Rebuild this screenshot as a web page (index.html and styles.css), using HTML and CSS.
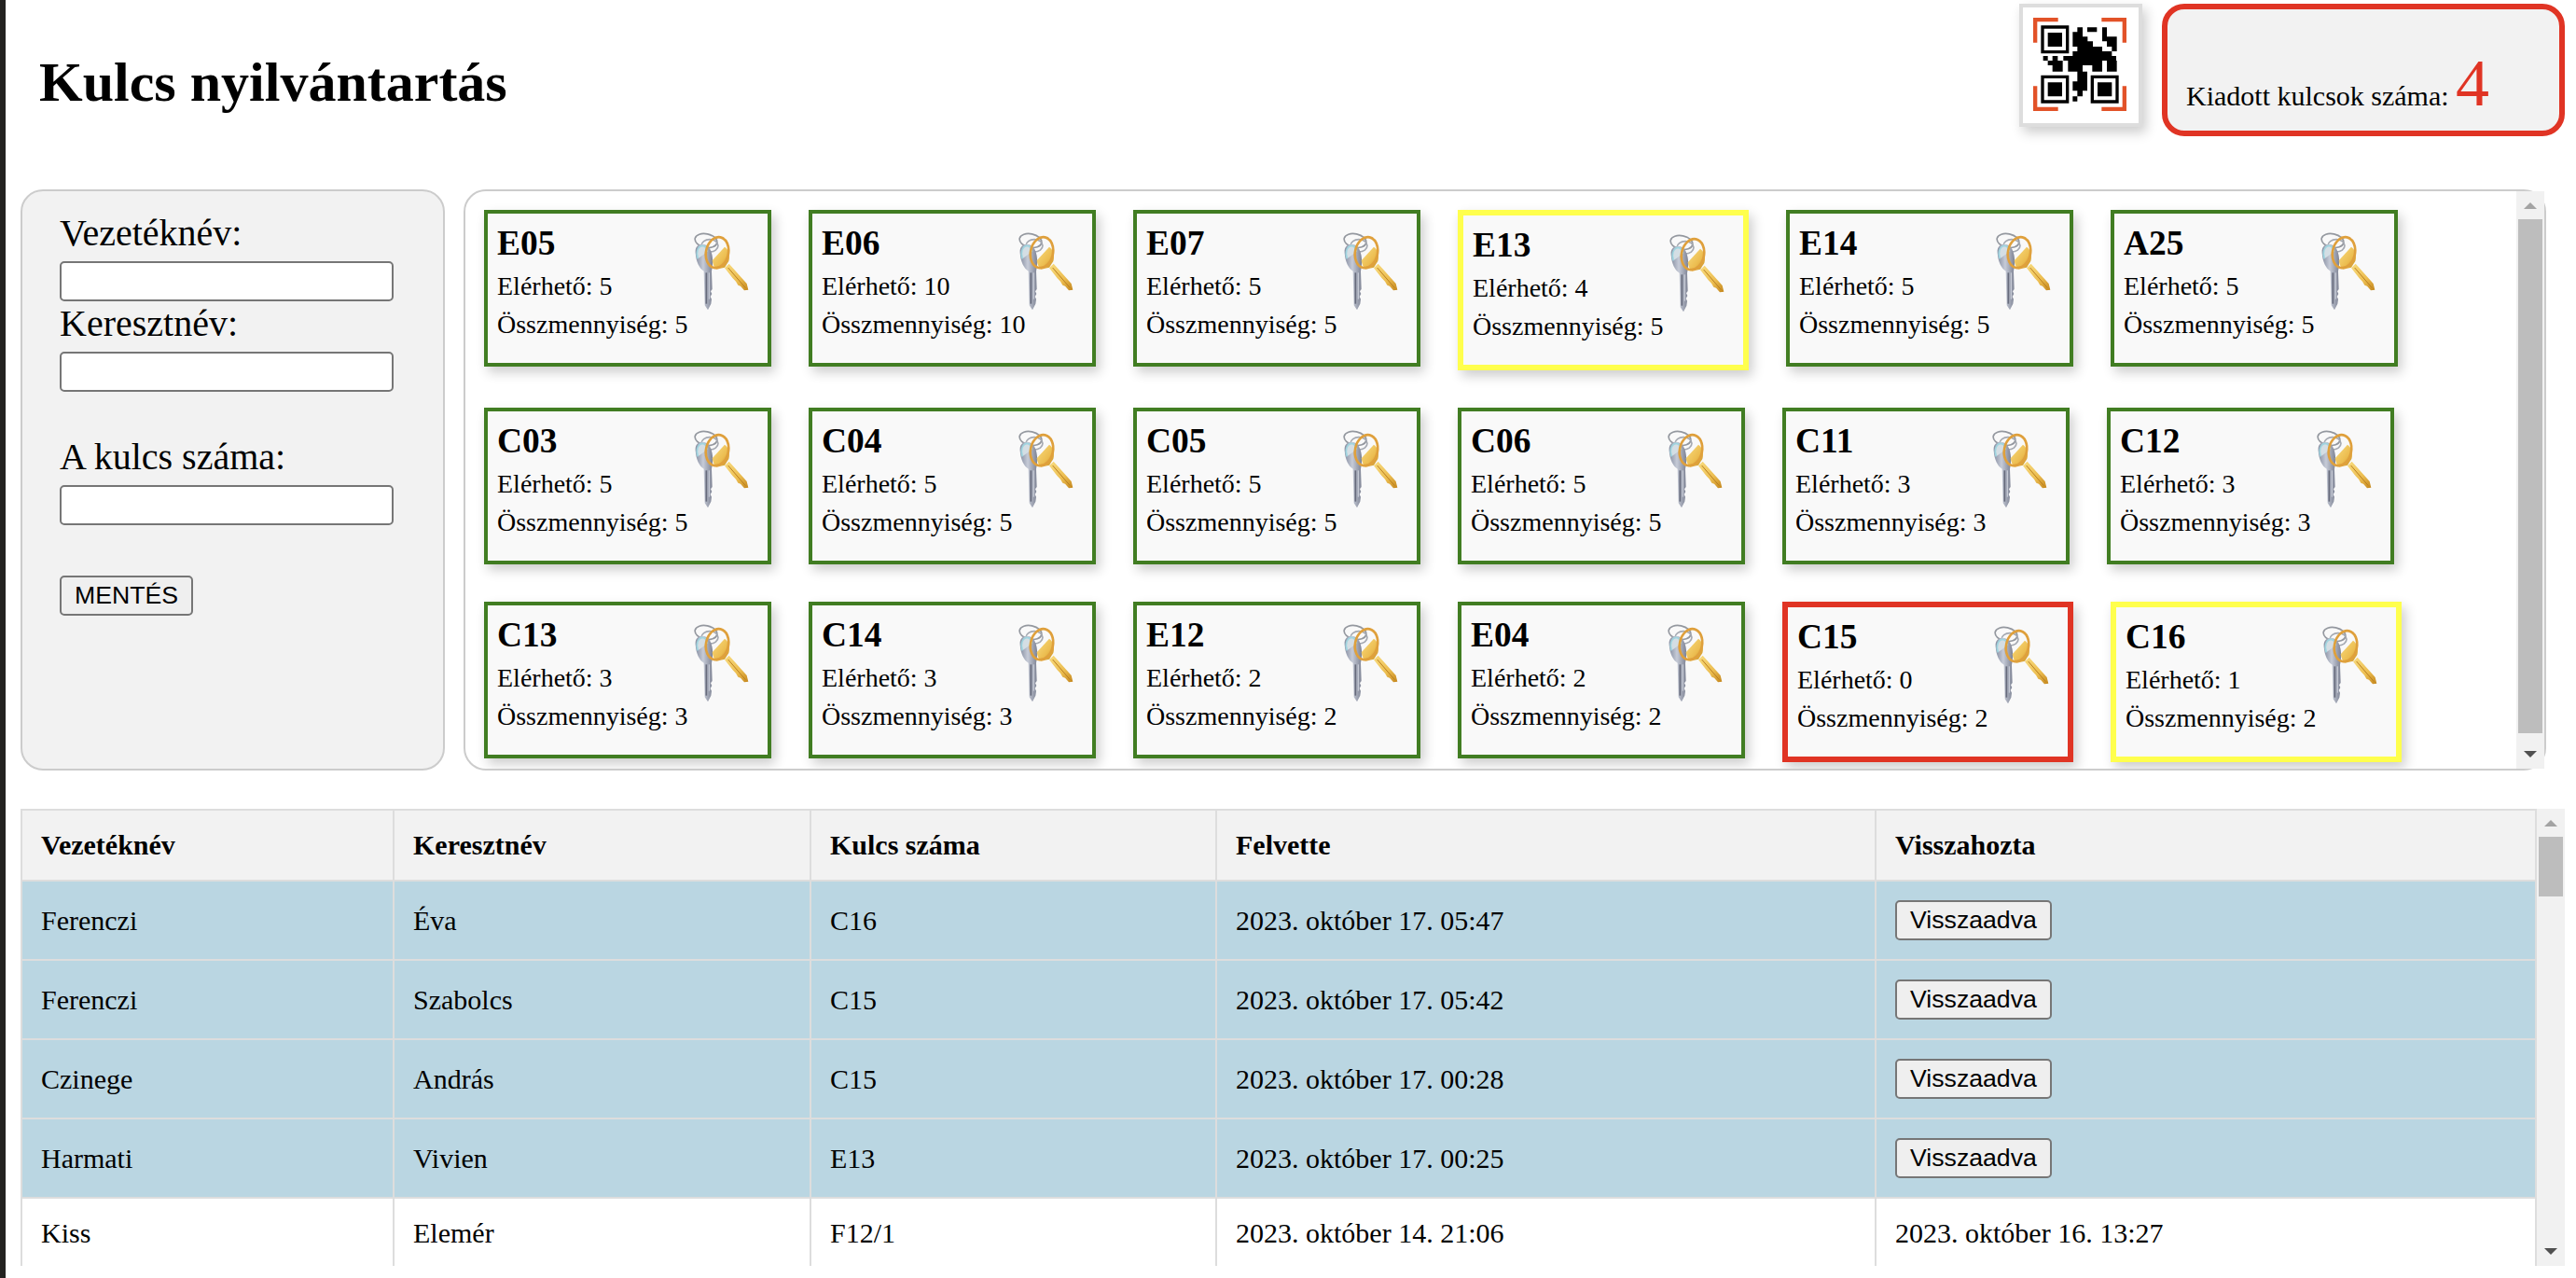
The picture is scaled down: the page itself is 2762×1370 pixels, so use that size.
FILE: index.html
```html
<!DOCTYPE html>
<html lang="hu">
<head>
    <meta charset="UTF-8">
    <title>Kulcs nyilvántartás</title>
    <link rel="stylesheet" href="styles.css">
</head>
<body>
    <svg class="icon-defs" aria-hidden="true">
        <defs>
            <linearGradient id="silver" x1="0" y1="0" x2="1" y2="0">
                <stop offset="0" stop-color="#878ea1"/>
                <stop offset="0.45" stop-color="#c6cbd7"/>
                <stop offset="1" stop-color="#7d8293"/>
            </linearGradient>
            <linearGradient id="gold" x1="0" y1="0" x2="1" y2="1">
                <stop offset="0" stop-color="#f8dc80"/>
                <stop offset="0.6" stop-color="#ecbd50"/>
                <stop offset="1" stop-color="#c4861c"/>
            </linearGradient>
            <symbol id="key" viewBox="130 85 180 252">
                <ellipse cx="172" cy="112" rx="36" ry="22" transform="rotate(12 172 112)" fill="none" stroke="#94989f" stroke-width="5"/>
                <ellipse cx="184" cy="128" rx="27" ry="20" fill="none" stroke="#a5a9b1" stroke-width="5"/>
                <path d="M138 150C136 125 158 118 175 128C192 140 198 175 190 210L192 268L187 275L191 283L186 292L190 300L188 315L178 335L168 320L165 210C150 200 140 180 138 150Z" fill="url(#silver)"/>
                <path d="M146 170C138 150 146 130 160 128C170 128 176 138 176 148" fill="#d4dee4" stroke="#9fd4df" stroke-width="5"/>
                <path d="M173 215V315" stroke="#676b7c" stroke-width="5"/>
                <path d="M182 215V300" stroke="#d0d4de" stroke-width="3"/>
                <path d="M232 200L246 186L303 250L308 270L295 272L283 258L275 255L268 243L258 233Z" fill="url(#gold)"/>
                <path d="M243 199L299 264" stroke="#b97f20" stroke-width="3"/>
                <path d="M192 176L232 132C245 140 250 160 245 178L232 198L205 204C198 198 194 188 192 176Z" fill="url(#gold)"/>
                <ellipse cx="208" cy="150" rx="36" ry="50" transform="rotate(12 208 150)" fill="none" stroke="#dfa03c" stroke-width="8"/>
            </symbol>
        </defs>
    </svg>

    <header class="top-bar">
        <h1 class="page-title">Kulcs nyilvántartás</h1>
        <a class="qr-box" href="#">
            <svg class="qr-icon" viewBox="30 -6 372 372">
                <path d="M63 107V27H143V40H76V107ZM283 27H363V107H350V40H283ZM63 247H76V314H143V327H63ZM350 247H363V327H283V314H350Z" fill="#e25228"/>
                <path fill-rule="evenodd" d="M88 52H178V142H88ZM98 62V132H168V62ZM88 212H178V302H88ZM98 222V292H168V222ZM248 212H338V302H248ZM258 222V292H328V222Z"/>
                <path d="M110 75H156V120H110ZM110 235H156V280H110ZM270 235H316V280H270Z"/>
                <path d="M205 58H222V73H205ZM237 58H268V73H237ZM285 58H300V88H285ZM190 73H222V88H190ZM190 88H238V103H190ZM285 88H332V103H285ZM190 103H255V120H190ZM300 103H332V120H300ZM205 120H285V135H205ZM316 120H332V135H316ZM190 135H316V150H190ZM95 150H110V165H95ZM125 150H142V165H125ZM160 150H330V165H160ZM110 165H158V180H110ZM175 165H285V180H175ZM253 180H285V200H253ZM300 165H332V200H300ZM125 180H158V200H125ZM175 180H222V200H175ZM205 200H237V262H205ZM190 232H205V262H190ZM205 262H222V280H205ZM190 280H205V296H190Z"/>
            </svg>
        </a>
        <div class="issued-box">
            <span class="issued-label">Kiadott kulcsok száma:</span>
            <span class="issued-value">4</span>
        </div>
    </header>

    <main class="main-row">
        <form class="key-form">
            <label class="form-label" for="lastname">Vezetéknév:</label>
            <input class="form-input" id="lastname" type="text">
            <label class="form-label" for="firstname">Keresztnév:</label>
            <input class="form-input input-gap" id="firstname" type="text">
            <label class="form-label" for="keynumber">A kulcs száma:</label>
            <input class="form-input" id="keynumber" type="text">
            <button class="save-btn" type="button">MENTÉS</button>
        </form>

        <section class="key-panel">
            <div class="key-list">
                <div class="key-card"><svg class="key-icon"><use href="#key"/></svg><h3>E05</h3><p>Elérhető: 5</p><p>Összmennyiség: 5</p></div>
                <div class="key-card"><svg class="key-icon"><use href="#key"/></svg><h3>E06</h3><p>Elérhető: 10</p><p>Összmennyiség: 10</p></div>
                <div class="key-card"><svg class="key-icon"><use href="#key"/></svg><h3>E07</h3><p>Elérhető: 5</p><p>Összmennyiség: 5</p></div>
                <div class="key-card low"><svg class="key-icon"><use href="#key"/></svg><h3>E13</h3><p>Elérhető: 4</p><p>Összmennyiség: 5</p></div>
                <div class="key-card"><svg class="key-icon"><use href="#key"/></svg><h3>E14</h3><p>Elérhető: 5</p><p>Összmennyiség: 5</p></div>
                <div class="key-card"><svg class="key-icon"><use href="#key"/></svg><h3>A25</h3><p>Elérhető: 5</p><p>Összmennyiség: 5</p></div>
                <div class="key-card"><svg class="key-icon"><use href="#key"/></svg><h3>C03</h3><p>Elérhető: 5</p><p>Összmennyiség: 5</p></div>
                <div class="key-card"><svg class="key-icon"><use href="#key"/></svg><h3>C04</h3><p>Elérhető: 5</p><p>Összmennyiség: 5</p></div>
                <div class="key-card"><svg class="key-icon"><use href="#key"/></svg><h3>C05</h3><p>Elérhető: 5</p><p>Összmennyiség: 5</p></div>
                <div class="key-card"><svg class="key-icon"><use href="#key"/></svg><h3>C06</h3><p>Elérhető: 5</p><p>Összmennyiség: 5</p></div>
                <div class="key-card"><svg class="key-icon"><use href="#key"/></svg><h3>C11</h3><p>Elérhető: 3</p><p>Összmennyiség: 3</p></div>
                <div class="key-card"><svg class="key-icon"><use href="#key"/></svg><h3>C12</h3><p>Elérhető: 3</p><p>Összmennyiség: 3</p></div>
                <div class="key-card"><svg class="key-icon"><use href="#key"/></svg><h3>C13</h3><p>Elérhető: 3</p><p>Összmennyiség: 3</p></div>
                <div class="key-card"><svg class="key-icon"><use href="#key"/></svg><h3>C14</h3><p>Elérhető: 3</p><p>Összmennyiség: 3</p></div>
                <div class="key-card"><svg class="key-icon"><use href="#key"/></svg><h3>E12</h3><p>Elérhető: 2</p><p>Összmennyiség: 2</p></div>
                <div class="key-card"><svg class="key-icon"><use href="#key"/></svg><h3>E04</h3><p>Elérhető: 2</p><p>Összmennyiség: 2</p></div>
                <div class="key-card empty"><svg class="key-icon"><use href="#key"/></svg><h3>C15</h3><p>Elérhető: 0</p><p>Összmennyiség: 2</p></div>
                <div class="key-card low"><svg class="key-icon"><use href="#key"/></svg><h3>C16</h3><p>Elérhető: 1</p><p>Összmennyiség: 2</p></div>
            </div>
            <div class="scroll-bar">
                <span class="scroll-up"></span>
                <span class="scroll-thumb thumb-keys"></span>
                <span class="scroll-down"></span>
            </div>
        </section>
    </main>

    <div class="log-wrap">
        <div class="log-view">
            <table class="log-table">
                <colgroup>
                    <col class="col-last">
                    <col class="col-first">
                    <col class="col-key">
                    <col class="col-taken">
                    <col class="col-back">
                </colgroup>
                <thead>
                    <tr><th>Vezetéknév</th><th>Keresztnév</th><th>Kulcs száma</th><th>Felvette</th><th>Visszahozta</th></tr>
                </thead>
                <tbody>
                    <tr class="open"><td>Ferenczi</td><td>Éva</td><td>C16</td><td>2023. október 17. 05:47</td><td><button class="back-btn" type="button">Visszaadva</button></td></tr>
                    <tr class="open"><td>Ferenczi</td><td>Szabolcs</td><td>C15</td><td>2023. október 17. 05:42</td><td><button class="back-btn" type="button">Visszaadva</button></td></tr>
                    <tr class="open"><td>Czinege</td><td>András</td><td>C15</td><td>2023. október 17. 00:28</td><td><button class="back-btn" type="button">Visszaadva</button></td></tr>
                    <tr class="open"><td>Harmati</td><td>Vivien</td><td>E13</td><td>2023. október 17. 00:25</td><td><button class="back-btn" type="button">Visszaadva</button></td></tr>
                    <tr><td>Kiss</td><td>Elemér</td><td>F12/1</td><td>2023. október 14. 21:06</td><td>2023. október 16. 13:27</td></tr>
                </tbody>
            </table>
        </div>
        <div class="scroll-bar">
            <span class="scroll-up"></span>
            <span class="scroll-thumb thumb-log"></span>
            <span class="scroll-down"></span>
        </div>
    </div>
</body>
</html>
```

FILE: styles.css
```css
html, body {
    height: 100%;
    overflow: hidden;
}
body {
    margin: 0;
    padding-left: 22px;
    box-sizing: border-box;
    font-family: "Liberation Serif", serif;
    background: linear-gradient(90deg, #232220 6px, #fff 6px);
    color: #000;
}
.icon-defs {
    position: absolute;
    width: 0;
    height: 0;
}

/* felso sav */
.top-bar {
    display: flex;
    align-items: flex-start;
    padding: 4px 12px 0 0;
    margin-bottom: 57px;
}
.page-title {
    font-size: 60px;
    margin: 50px auto 0 20px;
}
.qr-box {
    display: block;
    width: 124px;
    height: 124px;
    background: #fff;
    border: 4px solid #ddd;
    box-shadow: 4px 6px 12px rgba(0, 0, 0, 0.2);
    margin-right: 21px;
}
.qr-icon {
    display: block;
    width: 124px;
    height: 124px;
}
.issued-box {
    box-sizing: border-box;
    width: 432px;
    height: 142px;
    padding: 38px 20px 0;
    font-size: 30px;
    background: #f2f2f2;
    border: 6px solid #e03424;
    border-radius: 24px;
    white-space: nowrap;
}
.issued-value {
    font-size: 72px;
    color: #e03424;
}

/* urlap es kulcsok */
.main-row {
    display: flex;
    gap: 20px;
    height: 623px;
    padding-right: 32px;
}
.key-form {
    box-sizing: border-box;
    width: 455px;
    flex: none;
    padding: 21px 40px;
    background: #f2f2f2;
    border: 2px solid #ccc;
    border-radius: 24px;
}
.form-label {
    display: block;
    font-size: 40px;
    margin-bottom: 7px;
}
.form-input {
    display: block;
    box-sizing: border-box;
    width: 358px;
    height: 43px;
    background: #fff;
    border: 2px solid #767676;
    border-radius: 5px;
}
.input-gap {
    margin-bottom: 46px;
}
.save-btn, .back-btn {
    box-sizing: border-box;
    height: 43px;
    padding: 0 14px;
    font-family: "Liberation Sans", sans-serif;
    font-size: 26.67px;
    background: #efefef;
    color: #000;
    border: 2px solid #767676;
    border-radius: 5px;
}
.save-btn {
    margin-top: 54px;
}
.key-panel {
    flex: 1;
    display: flex;
    background: #fff;
    border: 2px solid #ccc;
    border-radius: 24px;
}
.key-list {
    flex: 1;
    display: flex;
    flex-wrap: wrap;
    align-items: flex-start;
    align-content: flex-start;
    gap: 40px;
    padding: 20px 0 0 20px;
    overflow: hidden;
    border-radius: 24px 0 0 24px;
}
.key-card {
    width: 280px;
    padding: 10px 10px 16px;
    background: #f9f9f9;
    border: 4px solid #417d22;
    box-shadow: 4px 6px 12px rgba(0, 0, 0, 0.2);
}
.key-card.low {
    border: 6px solid #ffff4d;
}
.key-card.empty {
    border: 6px solid #e03424;
}
.key-card h3 {
    font-size: 37.44px;
    margin: 0 0 9px;
}
.key-card p {
    font-size: 28px;
    margin: 0 0 9px;
}
.key-icon {
    float: right;
    width: 60px;
    height: 84px;
    margin: 10px 10px -10px 0;
}

/* naplo tabla */
.log-wrap {
    display: flex;
    width: 2728px;
    height: 490px;
    margin-top: 41px;
}
.log-view {
    flex: 1;
    overflow: hidden;
}
.log-table {
    width: 100%;
    table-layout: fixed;
    border-collapse: collapse;
    font-size: 30px;
}
.col-last { width: 399px; }
.col-first { width: 447px; }
.col-key { width: 435px; }
.col-taken { width: 707px; }
.col-back { width: 708px; }
.log-table th, .log-table td {
    border: 2px solid #ddd;
    padding: 20px;
    text-align: left;
}
.log-table th {
    background: #f2f2f2;
}
.log-table tr.open td {
    background: #bad6e2;
}
.back-btn {
    display: block;
}

/* gorgetosavok */
.scroll-bar {
    flex: none;
    display: flex;
    flex-direction: column;
    align-items: center;
    width: 30px;
    background: #f1f1f1;
}
.scroll-up {
    margin: 12px 0 11px;
    border: solid transparent;
    border-width: 0 7px 7px;
    border-bottom-color: #a3a3a3;
}
.scroll-down {
    margin: auto 0 12px;
    border: solid transparent;
    border-width: 7px 7px 0;
    border-top-color: #505050;
}
.scroll-thumb {
    width: 26px;
    background: #bdbdbd;
}
.thumb-keys {
    height: 551px;
}
.thumb-log {
    height: 64px;
}
```
